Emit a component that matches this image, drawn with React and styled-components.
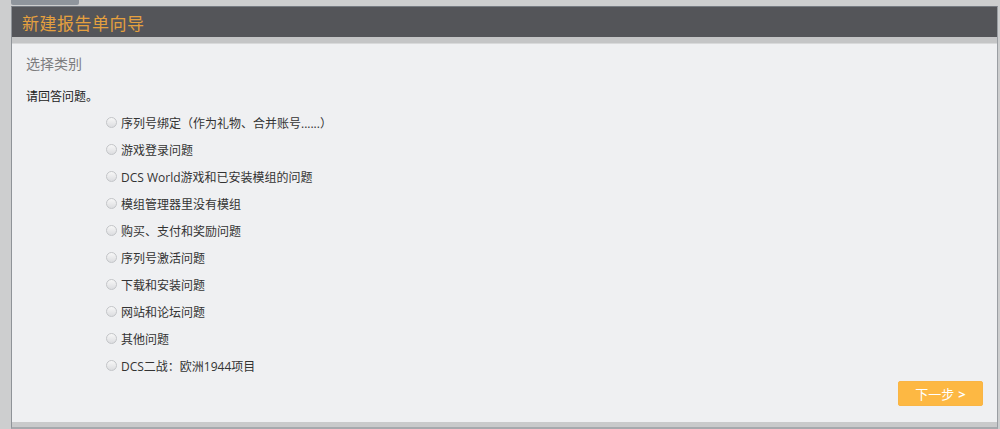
import React, { useState } from 'react';
import styled, { createGlobalStyle } from 'styled-components';

const CATEGORIES = [
  "序列号绑定（作为礼物、合并账号......）",
  "游戏登录问题",
  "DCS World游戏和已安装模组的问题",
  "模组管理器里没有模组",
  "购买、支付和奖励问题",
  "序列号激活问题",
  "下载和安装问题",
  "网站和论坛问题",
  "其他问题",
  "DCS二战：欧洲1944项目",
];

const App = () => {
  const [selected, setSelected] = useState(null);

  return (
    <>
      <GlobalStyle />
      <Page>
        <TopTab />
        <Panel>
          <Header>新建报告单向导</Header>
          <HeaderShadow />
          <Body>
            <SectionTitle>选择类别</SectionTitle>
            <Prompt>请回答问题。</Prompt>
            <OptionList>
              {CATEGORIES.map((text, index) => (
                <Option key={index} onClick={() => setSelected(index)}>
                  <Radio checked={selected === index} />
                  <OptionText>{text}</OptionText>
                </Option>
              ))}
            </OptionList>
            <Actions>
              <NextButton type="button">
                下一步 <Arrow>&gt;</Arrow>
              </NextButton>
            </Actions>
          </Body>
          <FooterStrip />
        </Panel>
      </Page>
    </>
  );
};

const GlobalStyle = createGlobalStyle`
  html, body {
    margin: 0;
    padding: 0;
    background: #cdcecf;
  }
  body {
    font-family: "Open Sans", "Noto Sans CJK SC", sans-serif;
  }
`;

const Page = styled.div`
  width: 1000px;
  height: 429px;
  display: flex;
  flex-direction: column;
  overflow: hidden;
`;

const TopTab = styled.div`
  width: 68px;
  height: 5px;
  margin-left: 11px;
  background: #8f959c;
  border-radius: 0 0 2px 2px;
  margin-bottom: 1px;
`;

const Panel = styled.div`
  margin-left: 11px;
  width: 985px;
  height: 420px;
  display: flex;
  flex-direction: column;
  border-left: 1px solid #8f9398;
  border-right: 1px solid #9a9ea3;
  border-bottom: 2px solid #a6a9ad;
  border-top: 1px solid #767b82;
  background: #eff0f2;
`;

const Header = styled.div`
  height: 30px;
  display: flex;
  align-items: center;
  padding-left: 10px;
  background: #545559;
  color: #e5a03f;
  font-family: "Noto Sans CJK SC", sans-serif;
  font-size: 17px;
  letter-spacing: 0.5px;
`;

const HeaderShadow = styled.div`
  height: 6px;
  background: #c4c5c6;
  border-bottom: 1px solid #d8d9da;
`;

const Body = styled.div`
  flex: 1;
  display: flex;
  flex-direction: column;
  padding: 9px 14px 0 14px;
`;

const SectionTitle = styled.div`
  font-family: "Noto Sans CJK SC", sans-serif;
  font-size: 14px;
  color: #7d7d7f;
  line-height: 20px;
`;

const Prompt = styled.div`
  margin-top: 15px;
  font-family: "Noto Sans CJK SC", sans-serif;
  font-size: 12px;
  color: #222;
  line-height: 16px;
`;

const OptionList = styled.div`
  display: flex;
  flex-direction: column;
  margin-top: 5px;
  padding-left: 80px;
`;

const Option = styled.label`
  height: 27px;
  display: flex;
  align-items: center;
  gap: 4px;
  cursor: pointer;
`;

const Radio = styled.span`
  width: 9px;
  height: 9px;
  border-radius: 50%;
  border: 1px solid #c3c5c8;
  background: ${props => props.checked
    ? 'radial-gradient(circle, #555 0 2px, #f2f2f2 3px)'
    : 'linear-gradient(#f7f7f7, #dcdde0)'};
  flex-shrink: 0;
`;

const OptionText = styled.span`
  font-family: "Open Sans", "Noto Sans CJK SC", sans-serif;
  font-size: 12px;
  color: #333;
`;

const Actions = styled.div`
  display: flex;
  justify-content: flex-end;
  margin-top: 2px;
`;

const NextButton = styled.button`
  width: 85px;
  height: 25px;
  border: 1px solid #f9b545;
  border-radius: 2px;
  background: #fdb843;
  color: #fff;
  font-family: "Noto Sans CJK SC", sans-serif;
  font-size: 13px;
  display: flex;
  align-items: center;
  justify-content: center;
  gap: 4px;
  cursor: pointer;
`;

const Arrow = styled.span`
  font-family: "Open Sans", sans-serif;
  font-weight: 700;
  font-size: 13px;
`;

const FooterStrip = styled.div`
  height: 5px;
  background: #c9cacb;
  margin-top: auto;
`;

export default App;
